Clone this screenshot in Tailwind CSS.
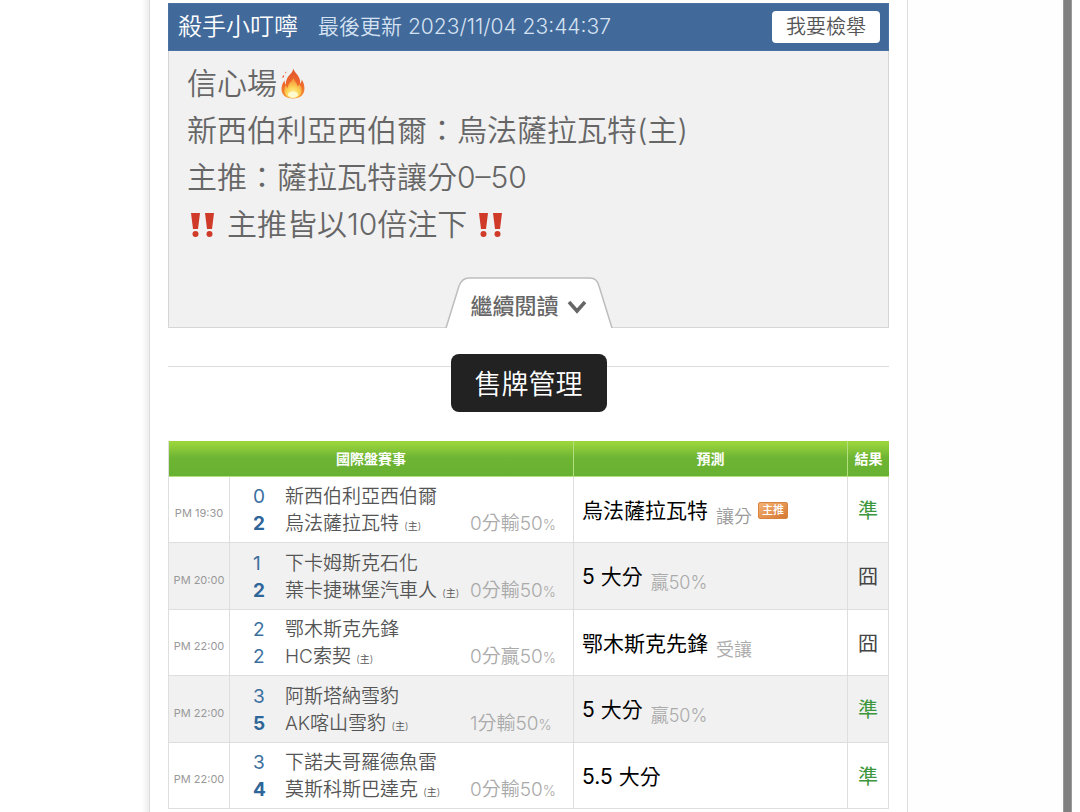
<!DOCTYPE html>
<html lang="zh-Hant">
<head>
<meta charset="utf-8">
<meta name="viewport" content="width=device-width, initial-scale=1">
<title>殺手小叮嚀</title>
<script src="https://cdn.jsdelivr.net/npm/@tailwindcss/browser@4"></script>
</head>
<body class="bg-white font-['Inter','Noto_Sans_CJK_TC',sans-serif] font-[350] text-[#666]">
<div class="flex min-h-screen">
  <div class="w-[150px] shrink-0 border-r border-[#dcdcdc] bg-linear-to-r from-white from-95% to-[#eeeeee]"></div>
  <main class="min-w-0 flex-1 border-r border-[#dedede] px-[18px] pt-[3px]">
    <article>
      <header class="flex h-12 items-center border border-[#4a71a3] bg-[#41699a] pr-2 pl-[9px]">
        <h1 class="text-2xl font-[350] text-white">殺手小叮嚀</h1>
        <p class="ml-5 flex-1 text-[21px] whitespace-nowrap text-[#d5e2f2]">最後更新 2023/11/04 23:44:37</p>
        <button type="button" class="h-8 rounded-sm bg-white px-3.5 text-xl leading-8 text-[#555]">我要檢舉</button>
      </header>
      <div class="border border-t-0 border-[#d6d6d6] bg-[#f1f1f1]">
        <div class="px-[18px] pt-[9px] text-3xl leading-[47px]">
          <p class="flex items-center">信心場<svg class="ml-1 h-[31px] w-6" viewBox="0 0 24 30" role="img" aria-label="火">
            <defs>
              <linearGradient id="flame" x1="0" y1="0" x2="0" y2="1">
                <stop offset="0" stop-color="#e2542f"/><stop offset=".55" stop-color="#ee6a2c"/><stop offset="1" stop-color="#f79a35"/>
              </linearGradient>
              <radialGradient id="core" cx=".5" cy=".85" r=".7">
                <stop offset="0" stop-color="#fff8b8"/><stop offset=".5" stop-color="#fdd75a"/><stop offset="1" stop-color="#f79a3a"/>
              </radialGradient>
            </defs>
            <path d="M12 0C13 3 16 5 18 9c1 2 1.500 4 1 6 1-.5 1.700-2 1.700-4 2 3 3 6 2.700 10-.3 5-4 9-11.400 9S.6 26 .5 21C.4 17 2 14 3.500 12c.2 2 .6 3 1.500 4C4.600 11 7 8 9 6c2-2 3-3.500 3-6Z" fill="url(#flame)"/>
            <path d="M1.500 9.500c-.5-1.500.5-2.500 1.500-3 .5 1.500 0 2.500-1.500 3ZM4 5c0-1 .5-1.500 1.200-2 .3 1 0 1.700-1.200 2Z" fill="#e8683f"/>
            <path d="M12.500 9c.3 3 3.500 5 4 9 1-.5 1.600-1.500 1.800-2.500C20 18 21 20 20.500 23c-.6 4-4 6.500-8.500 6.500S3.600 27 3.400 22.500C3.300 20 4 18 5 16.500c.3 1.700 1 2.500 2 3C6.500 14.500 11.500 13 12.500 9Z" fill="url(#core)"/>
            <ellipse cx="12" cy="26" rx="5" ry="3" fill="#fffbd0"/>
          </svg></p>
          <p>新西伯利亞西伯爾：烏法薩拉瓦特(主)</p>
          <p>主推：薩拉瓦特讓分0–50</p>
          <p class="flex items-center"><svg class="mr-3 ml-1 h-[26px] w-6" viewBox="0 0 24 26" fill="#cf3a29" role="img" aria-label="!!"><path d="M0 1h9L7 17H2ZM14 1h9l-2 16h-5Z"/><circle cx="4.500" cy="22" r="3"/><circle cx="18.500" cy="22" r="3"/></svg>主推皆以10倍注下<svg class="ml-3 h-[26px] w-6" viewBox="0 0 24 26" fill="#cf3a29" role="img" aria-label="!!"><path d="M0 1h9L7 17H2ZM14 1h9l-2 16h-5Z"/><circle cx="4.500" cy="22" r="3"/><circle cx="18.500" cy="22" r="3"/></svg></p>
        </div>
        <div class="mt-[29px] -mb-px flex justify-center">
          <button type="button" class="grid h-[51px] w-[168px] place-items-center">
            <svg class="col-start-1 row-start-1" width="168" height="51" viewBox="0 0 168 51" aria-hidden="true">
              <path d="M1 51 14 9Q17 1 24 1H145Q152 1 154 9L167 51" fill="#fff" stroke="#bdbdbd" stroke-width="1.500"/>
            </svg>
            <span class="col-start-1 row-start-1 flex items-center gap-2 pt-2 text-[22px] font-medium text-[#666]">繼續閱讀
              <svg width="20" height="14" viewBox="0 0 20 14" fill="none" stroke="#666" stroke-width="3.500" aria-hidden="true"><path d="m2 2 8 9 8-9"/></svg>
            </span>
          </button>
        </div>
      </div>
    </article>
    <div class="mt-[26px] flex items-start">
      <div class="mt-3 h-px flex-1 bg-[#dcdcdc]"></div>
      <button type="button" class="h-[58px] w-[156px] rounded-lg bg-[#222] pt-1 text-[27px] text-white">售牌管理</button>
      <div class="mt-3 h-px flex-1 bg-[#dcdcdc]"></div>
    </div>
    <table class="mt-[29px] w-full table-fixed border-separate border-spacing-0 border-l border-[#dedede]">
      <colgroup><col class="w-[61px]"><col class="w-[344px]"><col><col class="w-[41px]"></colgroup>
      <thead>
        <tr class="h-9 bg-linear-to-b from-[#9bd53c] from-5% via-[#6fb534] via-45% to-[#67b031] text-sm font-bold text-white">
          <th colspan="2" class="border-r border-b border-[#b3df7e] p-0">國際盤賽事</th>
          <th class="border-r border-b border-[#b3df7e] p-0">預測</th>
          <th class="border-b border-[#b3df7e] p-0">結果</th>
        </tr>
      </thead>
      <tbody class="[&_td]:border-r [&_td]:border-b [&_td]:border-[#dedede] [&_td]:p-0 [&>tr]:h-[66px] [&>tr:nth-child(even)]:h-[67px] [&>tr:nth-child(even)]:bg-[#f1f1f1]">
        <tr>
          <td class="pt-2! text-center text-[11px] font-normal whitespace-nowrap text-[#999]">PM 19:30</td>
          <td>
            <div class="grid grid-cols-[32px_1fr_103px] pt-1 pl-[23px] text-[19px] leading-[27px] text-[#555]">
              <span class="font-normal text-[#3a6f9f]">0</span><span class="col-span-2">新西伯利亞西伯爾</span>
              <span class="font-bold text-[#2f6699]">2</span><span>烏法薩拉瓦特 <small class="text-[10px]">(主)</small></span><span class="text-[19px] leading-[27px] text-[#aaa]">0分輸50<small class="text-sm">%</small></span>
            </div>
          </td>
          <td>
            <div class="flex items-center gap-2 pt-0.5 pl-2">
              <span class="text-[21px] font-normal text-black">烏法薩拉瓦特</span><span class="pt-3 text-lg text-[#999]">讓分</span><span class="-ml-0.5 h-[17px] w-[30px] rounded-xs border border-[#d9843e] bg-linear-to-br from-[#f3b273] to-[#d57830] text-center text-[11px] leading-[15px] font-medium text-white">主推</span>
            </div>
          </td>
          <td class="pt-0.5! text-center text-xl font-normal text-[#3c963c]">準</td>
        </tr>
        <tr>
          <td class="pt-2! text-center text-[11px] font-normal whitespace-nowrap text-[#999]">PM 20:00</td>
          <td>
            <div class="grid grid-cols-[32px_1fr_103px] pt-1 pl-[23px] text-[19px] leading-[27px] text-[#555]">
              <span class="font-normal text-[#3a6f9f]">1</span><span class="col-span-2">下卡姆斯克石化</span>
              <span class="font-bold text-[#2f6699]">2</span><span class="whitespace-nowrap">葉卡捷琳堡汽車人 <small class="text-[10px]">(主)</small></span><span class="text-[19px] leading-[27px] text-[#aaa]">0分輸50<small class="text-sm">%</small></span>
            </div>
          </td>
          <td>
            <div class="flex items-center gap-2 pt-0.5 pl-2">
              <span class="text-[21px] font-normal text-black">5 大分</span><span class="pt-3 text-lg text-[#aaa]">贏50%</span>
            </div>
          </td>
          <td class="pt-0.5! text-center text-xl font-normal text-[#444]">囧</td>
        </tr>
        <tr>
          <td class="pt-2! text-center text-[11px] font-normal whitespace-nowrap text-[#999]">PM 22:00</td>
          <td>
            <div class="grid grid-cols-[32px_1fr_103px] pt-1 pl-[23px] text-[19px] leading-[27px] text-[#555]">
              <span class="font-normal text-[#3a6f9f]">2</span><span class="col-span-2">鄂木斯克先鋒</span>
              <span class="font-normal text-[#3a6f9f]">2</span><span>HC索契 <small class="text-[10px]">(主)</small></span><span class="text-[19px] leading-[27px] text-[#aaa]">0分贏50<small class="text-sm">%</small></span>
            </div>
          </td>
          <td>
            <div class="flex items-center gap-2 pt-0.5 pl-2">
              <span class="text-[21px] font-normal text-black">鄂木斯克先鋒</span><span class="pt-3 text-lg text-[#aaa]">受讓</span>
            </div>
          </td>
          <td class="pt-0.5! text-center text-xl font-normal text-[#444]">囧</td>
        </tr>
        <tr>
          <td class="pt-2! text-center text-[11px] font-normal whitespace-nowrap text-[#999]">PM 22:00</td>
          <td>
            <div class="grid grid-cols-[32px_1fr_103px] pt-1 pl-[23px] text-[19px] leading-[27px] text-[#555]">
              <span class="font-normal text-[#3a6f9f]">3</span><span class="col-span-2">阿斯塔納雪豹</span>
              <span class="font-bold text-[#2f6699]">5</span><span>AK喀山雪豹 <small class="text-[10px]">(主)</small></span><span class="text-[19px] leading-[27px] text-[#aaa]">1分輸50<small class="text-sm">%</small></span>
            </div>
          </td>
          <td>
            <div class="flex items-center gap-2 pt-0.5 pl-2">
              <span class="text-[21px] font-normal text-black">5 大分</span><span class="pt-3 text-lg text-[#aaa]">贏50%</span>
            </div>
          </td>
          <td class="pt-0.5! text-center text-xl font-normal text-[#3c963c]">準</td>
        </tr>
        <tr>
          <td class="pt-2! text-center text-[11px] font-normal whitespace-nowrap text-[#999]">PM 22:00</td>
          <td>
            <div class="grid grid-cols-[32px_1fr_103px] pt-1 pl-[23px] text-[19px] leading-[27px] text-[#555]">
              <span class="font-normal text-[#3a6f9f]">3</span><span class="col-span-2">下諾夫哥羅德魚雷</span>
              <span class="font-bold text-[#2f6699]">4</span><span>莫斯科斯巴達克 <small class="text-[10px]">(主)</small></span><span class="text-[19px] leading-[27px] text-[#aaa]">0分輸50<small class="text-sm">%</small></span>
            </div>
          </td>
          <td>
            <div class="flex items-center gap-2 pt-0.5 pl-2">
              <span class="text-[21px] font-normal text-black">5.5 大分</span>
            </div>
          </td>
          <td class="pt-0.5! text-center text-xl font-normal text-[#3c963c]">準</td>
        </tr>
      </tbody>
    </table>
  </main>
  <div class="w-[155px] shrink-0 bg-[#fefefe]"></div>
  <div class="w-[9px] shrink-0 border-x border-[#999] bg-[#808080]"></div>
  <div class="w-2 shrink-0"></div>
</div>
</body>
</html>
